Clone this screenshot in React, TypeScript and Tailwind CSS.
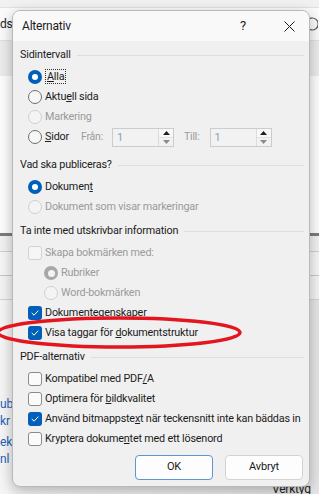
import React from 'react';

const font = { fontFamily: 'Roboto, "Noto Sans", sans-serif' };

function Radio({ checked = false, disabled = false }: { checked?: boolean; disabled?: boolean }) {
  if (checked && !disabled) {
    return (
      <span className="flex h-[14px] w-[14px] shrink-0 items-center justify-center rounded-full bg-[#005fb8]">
        <span className="h-[6px] w-[6px] rounded-full bg-white" />
      </span>
    );
  }
  if (checked && disabled) {
    return (
      <span className="flex h-[14px] w-[14px] shrink-0 items-center justify-center rounded-full bg-[#a8a8a8]">
        <span className="h-[7px] w-[7px] rounded-full bg-[#f3f3f3]" />
      </span>
    );
  }
  return (
    <span
      className={`h-[14px] w-[14px] shrink-0 rounded-full border ${
        disabled ? 'border-[#cfcfcf] bg-[#f4f4f4]' : 'border-[#6f6f6f] bg-[#f7f7f7]'
      }`}
    />
  );
}

function Check({ checked = false, disabled = false }: { checked?: boolean; disabled?: boolean }) {
  if (checked) {
    return (
      <span className="flex h-[14px] w-[14px] shrink-0 items-center justify-center rounded-[3px] bg-[#005fb8]">
        <svg width="10" height="10" viewBox="0 0 10 10" fill="none">
          <path d="M2 5.2 L4.1 7.2 L8 2.9" stroke="white" strokeWidth="1" strokeLinecap="round" strokeLinejoin="round" />
        </svg>
      </span>
    );
  }
  return (
    <span
      className={`h-[14px] w-[14px] shrink-0 rounded-[3px] border ${
        disabled ? 'border-[#d2d2d2] bg-[#f6f6f6]' : 'border-[#8a8a8a] bg-[#fbfbfb]'
      }`}
    />
  );
}

function Heading({ children }: { children: React.ReactNode }) {
  return (
    <div className="flex h-[20px] items-center gap-[6px] text-[#1b1b1b]">
      <span className="whitespace-nowrap">{children}</span>
      <span className="h-px flex-1 bg-[#dddddd]" />
    </div>
  );
}

function Row({
  control,
  children,
  disabled = false,
  indent = false,
}: {
  control: React.ReactNode;
  children: React.ReactNode;
  disabled?: boolean;
  indent?: boolean;
}) {
  return (
    <div className={`flex h-[20px] items-center gap-[3px] ${indent ? 'pl-[24px]' : 'pl-[8px]'}`}>
      {control}
      <span className={`whitespace-nowrap ${disabled ? 'text-[#9a9a9a]' : 'text-[#1b1b1b]'}`}>{children}</span>
    </div>
  );
}

function SpinBox() {
  return (
    <div className="flex h-[19px] w-[62px] border border-[#cccccc] bg-[#f2f2f2]">
      <span className="flex-1 pl-[4px] text-[11px] leading-[17px] text-[#8aa0c0]">1</span>
      <div className="flex w-[15px] flex-col border-l border-[#dcdcdc]">
        <span className="flex flex-1 items-center justify-center border-b border-[#e2e2e2] bg-[#f8f8f8]">
          <svg width="7" height="4" viewBox="0 0 7 4">
            <path d="M0 4 L3.5 0 L7 4 Z" fill="#1f1f1f" />
          </svg>
        </span>
        <span className="flex flex-1 items-center justify-center">
          <svg width="7" height="4" viewBox="0 0 7 4">
            <path d="M0 0 L3.5 4 L7 0 Z" fill="#8c8c8c" />
          </svg>
        </span>
      </div>
    </div>
  );
}

export default function App() {
  return (
    <div className="relative h-[494px] w-[319px] overflow-hidden bg-white text-[10.8px] tracking-[-0.2px]" style={font}>
      {/* Word window behind */}
      <div className="flex h-full flex-col">
        <div className="h-[8px] border-b border-[#e2e2e2] bg-[#f1f1f1]" />
        <div className="flex h-[32px] items-center justify-between bg-[#fbfbfb] pr-[1px]">
          <span className="text-[12px] text-[#222]">ds</span>
          <svg width="14" height="16" viewBox="0 0 14 16" fill="none">
            <path d="M3 5 A6 6 0 1 1 3 11" stroke="#555" strokeWidth="1.2" />
          </svg>
        </div>
        <div className="h-[36px] border-t border-[#e0e0e0] bg-[#ececec]" />
        <div className="h-[157px] bg-[#fdfdfd]" />
        <div className="h-[3px] bg-[#7d7d7d]" />
        <div className="h-[16px] border-b border-[#cfcfcf] bg-[#f2f2f2]" />
        <div className="h-[24px] border-b border-[#c8c8c8] bg-[#f6f6f6]" />
        <div className="h-[24px] border-b border-[#d4d4d4] bg-[#f4f4f4]" />
        <div className="flex flex-1 flex-col bg-gradient-to-r from-[#f6f6f6] to-[#e6e6e6] pt-[96px] text-[12px] leading-[17px] text-[#1f63b6]">
          <span>ub</span>
          <span>kr</span>
          <span className="mt-[4px]">ek</span>
          <span>nl</span>
        </div>
      </div>
      <span className="absolute left-[272px] top-[480px] text-[12px] text-[#222]">Verktyg</span>

      {/* Dialog */}
      <div className="absolute left-[12px] top-[10px] flex h-[477px] w-[298px] flex-col overflow-hidden rounded-[8px] border border-[#b9b9b9] bg-[#f0f0f0] shadow-[0_4px_14px_rgba(0,0,0,0.28)]">
        <div className="flex h-[30px] shrink-0 items-center bg-[#f9f9f9] pl-[9px] pr-[14px] text-[#1b1b1b]">
          <span className="flex-1 text-[12px]">Alternativ</span>
          <span className="mr-[38px] text-[13px]">?</span>
          <svg width="11" height="11" viewBox="0 0 11 11">
            <path d="M0.5 0.5 L10.5 10.5 M10.5 0.5 L0.5 10.5" stroke="#1b1b1b" strokeWidth="1" />
          </svg>
        </div>

        <div className="flex flex-1 flex-col pl-[7px] pr-[5px] pt-[4px]">
          <Heading>Sidintervall</Heading>
          <div className="mt-[2px] flex flex-col">
            <Row control={<Radio checked />}>
              <span className="border border-dotted border-[#333] px-px">
                <u>A</u>lla
              </span>
            </Row>
            <Row control={<Radio />}>
              Aktu<u>e</u>ll sida
            </Row>
            <Row control={<Radio disabled />} disabled>
              Markering
            </Row>
            <div className="flex h-[20px] items-center pl-[8px]">
              <Radio />
              <span className="ml-[3px] text-[#1b1b1b]">
                <u>S</u>idor
              </span>
              <span className="ml-[12px] text-[10.5px] text-[#9a9a9a]">Från:</span>
              <span className="ml-[9px]">
                <SpinBox />
              </span>
              <span className="ml-[10px] text-[10.5px] text-[#9a9a9a]">Till:</span>
              <span className="ml-[10px]">
                <SpinBox />
              </span>
            </div>
          </div>

          <div className="mt-[8px]">
            <Heading>Vad ska publiceras?</Heading>
          </div>
          <div className="mt-[2px] flex flex-col">
            <Row control={<Radio checked />}>
              Dokumen<u>t</u>
            </Row>
            <Row control={<Radio disabled />} disabled>
              Dokument som visar markeringar
            </Row>
          </div>

          <div className="mt-[4px]">
            <Heading>Ta inte med utskrivbar information</Heading>
          </div>
          <div className="mt-[2px] flex flex-col">
            <Row control={<Check disabled />} disabled>
              Skapa bokmärken med:
            </Row>
            <Row control={<Radio checked disabled />} disabled indent>
              Rubriker
            </Row>
            <Row control={<Radio disabled />} disabled indent>
              Word-bokmärken
            </Row>
            <Row control={<Check checked />}>
              Dokumente<u>g</u>enskaper
            </Row>
            <Row control={<Check checked />}>
              Visa taggar för <u>d</u>okumentstruktur
            </Row>
          </div>

          <div className="mt-[4px]">
            <Heading>PDF-alternativ</Heading>
          </div>
          <div className="mt-[2px] flex flex-col">
            <Row control={<Check />}>
              Kompatibel med PDF<u>/</u>A
            </Row>
            <Row control={<Check />}>
              Optimera för <u>b</u>ildkvalitet
            </Row>
            <Row control={<Check checked />}>
              Använd bitmappste<u>x</u>t när teckensnitt inte kan bäddas in
            </Row>
            <Row control={<Check />}>
              Kryptera dokume<u>n</u>tet med ett lösenord
            </Row>
          </div>

          <div className="mt-[6px] flex justify-end gap-[12px] pr-px">
            <button className="h-[25px] w-[78px] rounded-[4px] border border-[#5b95d6] bg-[#fdfdfd] text-[11px] text-[#1b1b1b]">
              OK
            </button>
            <button className="h-[25px] w-[78px] rounded-[4px] border border-[#d3d3d3] bg-[#fdfdfd] text-[11px] text-[#1b1b1b]">
              Avbryt
            </button>
          </div>
        </div>
      </div>

      {/* red annotation ellipse */}
      <svg className="pointer-events-none absolute left-0 top-0" width="319" height="494" viewBox="0 0 319 494">
        <ellipse cx="119" cy="332.5" rx="121" ry="14.5" fill="none" stroke="#e3151e" strokeWidth="3.5" />
      </svg>
    </div>
  );
}
